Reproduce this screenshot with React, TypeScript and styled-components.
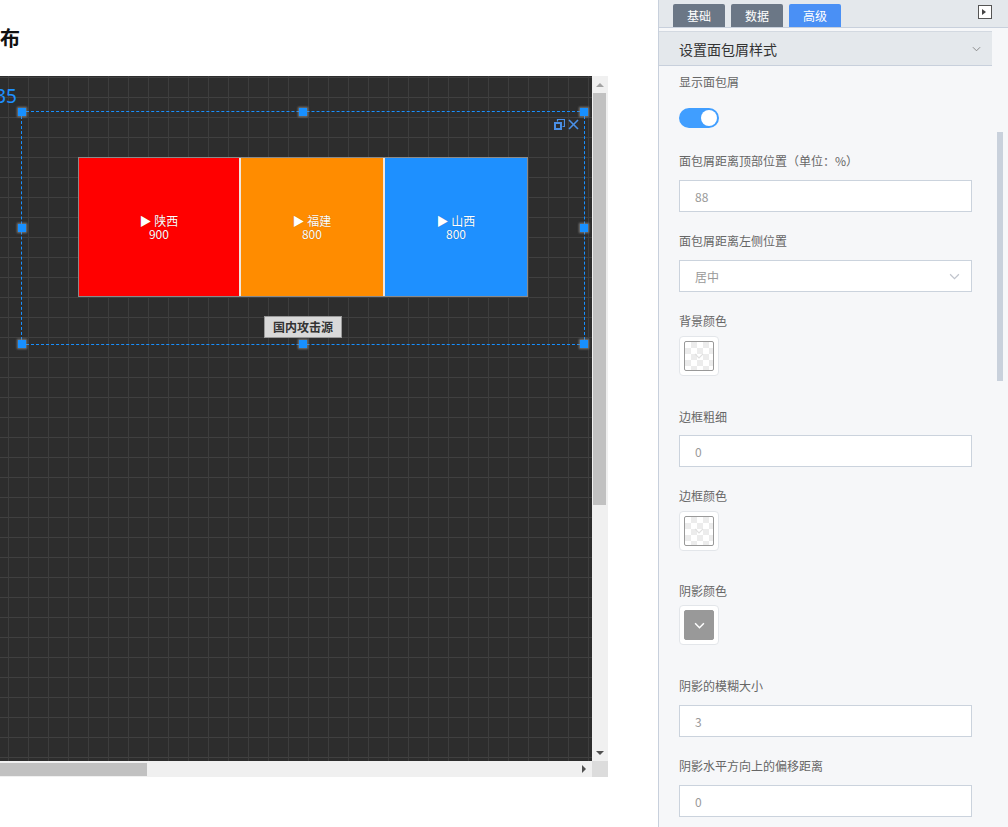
import React from "react";
import styled, { createGlobalStyle } from "styled-components";

const GlobalStyle = createGlobalStyle`
  html, body {
    margin: 0;
    padding: 0;
    background: #fff;
  }
  body {
    font-family: "Noto Sans CJK SC", "Noto Sans", sans-serif;
    font-size: 12px;
    color: #333;
  }
  * {
    box-sizing: border-box;
  }
`;

const Page = styled.div`
  display: flex;
  width: 1008px;
  height: 827px;
  overflow: hidden;
`;

/* ---------- stage (left) ---------- */

const Stage = styled.section`
  width: 658px;
  flex: none;
  overflow: hidden;
  background: #fff;
`;

// the stage is scrolled sideways, so its content starts left of the window
const StageInner = styled.div`
  margin-left: -120px;
  padding-top: 24px;
`;

const Title = styled.h1`
  margin: 0 0 24px;
  font-size: 20px;
  line-height: 28px;
  font-weight: 700;
  color: #111;
`;

const Frame = styled.div`
  width: 728px;
  height: 701px;
  display: grid;
  grid-template-columns: 1fr 16px;
  grid-template-rows: 1fr 16px;
`;

const Canvas = styled.div`
  position: relative;
  overflow: hidden;
  background-color: #2d2d2d;
  background-image: linear-gradient(to right, #3d3d3d 1px, transparent 1px),
    linear-gradient(to bottom, #404040 1px, transparent 1px);
  background-size: 20px 20px;
  background-position: 8px 1px;
`;

const Selection = styled.div`
  position: absolute;
  left: 141px;
  top: 35px;
  width: 564px;
  height: 234px;
  border: 1px dashed #1890ff;
`;

const Coord = styled.span`
  position: absolute;
  right: calc(100% + 5px);
  bottom: calc(100% + 6px);
  font-family: "Noto Sans", sans-serif;
  font-size: 19px;
  line-height: 20px;
  color: #1e90ff;
  white-space: nowrap;
`;

const Handle = styled.span<{ $x: number; $y: number }>`
  position: absolute;
  left: calc(${(p) => p.$x}% - 4px);
  top: calc(${(p) => p.$y}% - 4px);
  width: 8px;
  height: 8px;
  background: #1890ff;
  box-shadow: 0 0 2px 1px rgba(140, 140, 140, 0.8);
`;

const WidgetTools = styled.div`
  position: absolute;
  top: 7px;
  right: 5px;
  display: flex;
  gap: 3px;
`;

const Widget = styled.div`
  display: flex;
  flex-direction: column;
  align-items: center;
  padding-top: 45px;
`;

const Treemap = styled.div`
  width: 450px;
  height: 140px;
  display: flex;
  border: 1px solid #8a8a8a;
`;

const Cell = styled.div<{ $color: string; $first?: boolean }>`
  flex-basis: 0;
  display: flex;
  flex-direction: column;
  align-items: center;
  justify-content: center;
  background: ${(p) => p.$color};
  border-left: ${(p) => (p.$first ? "none" : "2px solid #f1e6dc")};
  color: #fff;
  font-size: 12px;
  line-height: 13px;
  text-shadow: 0 0 1px rgba(0, 0, 0, 0.3);
`;

const SeriesLabel = styled.div`
  margin-top: 19px;
  padding: 0 8px;
  line-height: 20px;
  font-size: 12px;
  font-weight: 700;
  color: #333;
  background: #d9d9d9;
  border: 1px solid #9a9a9a;
`;

const VScroll = styled.div`
  display: flex;
  flex-direction: column;
  align-items: center;
  background: #f0f0f0;
`;

const HScroll = styled.div`
  display: flex;
  align-items: center;
  background: #f0f0f0;
`;

const Corner = styled.div`
  background: #dcdcdc;
`;

const ArrowBox = styled.div<{ $dim?: boolean }>`
  flex: none;
  width: 16px;
  height: 17px;
  display: flex;
  align-items: center;
  justify-content: center;
  color: ${(p) => (p.$dim ? "#a3a3a3" : "#505050")};
`;

const VTrack = styled.div`
  flex: 1;
  align-self: stretch;
  padding: 0 2px 0 1px;
`;

const VThumb = styled.div`
  height: 412px;
  background: #c1c1c1;
`;

const HTrack = styled.div`
  flex: 1;
  align-self: stretch;
  padding: 2px 0 1px 17px;
`;

const HThumb = styled.div`
  width: 250px;
  height: 100%;
  background: #c1c1c1;
`;

/* ---------- settings panel (right) ---------- */

const Panel = styled.aside`
  position: relative;
  flex: 1;
  display: flex;
  flex-direction: column;
  border-left: 1px solid #c8d0dc;
  background: #f6f7f9;
`;

const TabBar = styled.div`
  height: 28px;
  flex: none;
  display: flex;
  align-items: flex-end;
  gap: 6px;
  padding: 0 16px 0 14px;
  background: #e4e8ec;
  border-bottom: 1px solid #c8d0dc;
`;

const Tab = styled.div<{ $active?: boolean }>`
  width: 52px;
  height: 23px;
  display: flex;
  align-items: center;
  justify-content: center;
  border-radius: 2px 2px 0 0;
  background: ${(p) => (p.$active ? "#4a90f5" : "#6b7786")};
  color: #fff;
  font-size: 12px;
`;

const Collapse = styled.div`
  margin-left: auto;
  align-self: flex-start;
  margin-top: 5px;
  width: 14px;
  height: 14px;
  display: flex;
`;

const PanelBody = styled.div`
  flex: 1;
  overflow: hidden;
  padding: 3px 16px 0 0;
`;

const SectionHead = styled.div`
  height: 35px;
  display: flex;
  align-items: center;
  justify-content: space-between;
  padding: 0 11px 0 20px;
  background: #e4e8ec;
  border-top: 1px solid #d3d9e1;
  border-bottom: 1px solid #c8d0dc;
  font-size: 14px;
  color: #333;
`;

const Form = styled.div`
  padding: 6px 20px 0;
`;

const Field = styled.div<{ $space?: number }>`
  margin-bottom: ${(p) => p.$space ?? 19}px;
`;

const Label = styled.div<{ $gap: number }>`
  margin-bottom: ${(p) => p.$gap}px;
  font-size: 12px;
  line-height: 20px;
  color: #666;
`;

const Toggle = styled.div`
  width: 40px;
  height: 20px;
  padding: 2px;
  display: flex;
  justify-content: flex-end;
  border-radius: 10px;
  background: #409eff;
`;

const Knob = styled.span`
  width: 16px;
  height: 16px;
  border-radius: 50%;
  background: #fff;
`;

const TextInput = styled.input`
  display: block;
  width: 100%;
  height: 32px;
  padding: 0 15px;
  border: 1px solid #cbd3dd;
  border-radius: 0;
  background: #fff;
  font-family: inherit;
  font-size: 12px;
  color: #999;
  outline: none;
`;

const Select = styled.div`
  height: 32px;
  display: flex;
  align-items: center;
  justify-content: space-between;
  padding: 0 11px 0 15px;
  border: 1px solid #cbd3dd;
  background: #fff;
  color: #999;
`;

const Swatch = styled.div`
  width: 40px;
  height: 40px;
  padding: 4px;
  border: 1px solid #e3e6ea;
  border-radius: 4px;
  background: #fff;
`;

const SwatchFill = styled.div<{ $color?: string }>`
  width: 100%;
  height: 100%;
  display: flex;
  align-items: center;
  justify-content: center;
  border: 1px solid #999;
  border-radius: 2px;
  background-color: ${(p) => p.$color ?? "#fff"};
  background-image: ${(p) =>
    p.$color
      ? "none"
      : "linear-gradient(45deg, #ececec 25%, transparent 25%, transparent 75%, #ececec 75%), linear-gradient(45deg, #ececec 25%, transparent 25%, transparent 75%, #ececec 75%)"};
  background-size: 12px 12px;
  background-position: 0 0, 6px 6px;
`;

const PanelThumb = styled.div`
  position: absolute;
  top: 132px;
  right: 5px;
  width: 6px;
  height: 249px;
  background: #c9d1dc;
`;

/* ---------- icons ---------- */

const Chevron = ({
  w = 9,
  color = "#999",
  stroke = 1.1,
}: {
  w?: number;
  color?: string;
  stroke?: number;
}) => (
  <svg width={w} height={Math.ceil(w / 2) + 1} viewBox="0 0 10 6" fill="none">
    <polyline points="1,1 5,5 9,1" stroke={color} strokeWidth={stroke} />
  </svg>
);

const RestoreIcon = () => (
  <svg width="11" height="11" viewBox="0 0 11 11" fill="none" stroke="#4a8fe6">
    <path d="M3.5 2.5V0.5h7v7H8.5" strokeWidth="1.2" />
    <rect x="1" y="4" width="6" height="6" strokeWidth="2" />
  </svg>
);

const CloseIcon = () => (
  <svg width="11" height="11" viewBox="0 0 11 11" stroke="#4a8fe6" strokeWidth="1.6">
    <line x1="1" y1="1" x2="10" y2="10" />
    <line x1="10" y1="1" x2="1" y2="10" />
  </svg>
);

const Tri = ({ dir }: { dir: "up" | "down" | "right" }) => {
  const pts = dir === "up" ? "0,4 4,0 8,4" : dir === "down" ? "0,0 8,0 4,4" : "0,0 4,4 0,8";
  const size = dir === "right" ? { w: 4, h: 8 } : { w: 8, h: 4 };
  return (
    <svg width={size.w} height={size.h} viewBox={`0 0 ${size.w} ${size.h}`}>
      <polygon points={pts} fill="currentColor" />
    </svg>
  );
};

const CollapseIcon = () => (
  <svg width="14" height="14" viewBox="0 0 14 14">
    <rect x="0.5" y="0.5" width="13" height="13" fill="#fff" stroke="#555" />
    <polygon points="4,4 8,7 4,10" fill="#444" />
  </svg>
);

/* ---------- data ---------- */

const regions = [
  { name: "陕西", value: 900, color: "#ff0000" },
  { name: "福建", value: 800, color: "#ff8c00" },
  { name: "山西", value: 800, color: "#1e90ff" },
];

const handles = [
  [0, 0], [50, 0], [100, 0],
  [0, 50], [100, 50],
  [0, 100], [50, 100], [100, 100],
];

const App: React.FC = () => {
  return (
    <Page>
      <GlobalStyle />
      <Stage>
        <StageInner>
          <Title>国内攻击源分布</Title>
          <Frame>
            <Canvas>
              <Selection>
                <Coord>35</Coord>
                {handles.map(([x, y]) => (
                  <Handle key={`${x}-${y}`} $x={x} $y={y} />
                ))}
                <WidgetTools>
                  <RestoreIcon />
                  <CloseIcon />
                </WidgetTools>
                <Widget>
                  <Treemap>
                    {regions.map((r, i) => (
                      <Cell
                        key={r.name}
                        $color={r.color}
                        $first={i === 0}
                        style={{ flexGrow: r.value }}
                      >
                        <span>▶ {r.name}</span>
                        <span>{r.value}</span>
                      </Cell>
                    ))}
                  </Treemap>
                  <SeriesLabel>国内攻击源</SeriesLabel>
                </Widget>
              </Selection>
            </Canvas>
            <VScroll>
              <ArrowBox $dim>
                <Tri dir="up" />
              </ArrowBox>
              <VTrack>
                <VThumb />
              </VTrack>
              <ArrowBox>
                <Tri dir="down" />
              </ArrowBox>
            </VScroll>
            <HScroll>
              <HTrack>
                <HThumb />
              </HTrack>
              <ArrowBox>
                <Tri dir="right" />
              </ArrowBox>
            </HScroll>
            <Corner />
          </Frame>
        </StageInner>
      </Stage>

      <Panel>
        <TabBar>
          <Tab>基础</Tab>
          <Tab>数据</Tab>
          <Tab $active>高级</Tab>
          <Collapse>
            <CollapseIcon />
          </Collapse>
        </TabBar>
        <PanelBody>
          <SectionHead>
            <span>设置面包屑样式</span>
            <Chevron color="#8a8a8a" />
          </SectionHead>
          <Form>
            <Field $space={23}>
              <Label $gap={16}>显示面包屑</Label>
              <Toggle>
                <Knob />
              </Toggle>
            </Field>
            <Field>
              <Label $gap={9}>面包屑距离顶部位置（单位：%）</Label>
              <TextInput readOnly value="88" />
            </Field>
            <Field>
              <Label $gap={9}>面包屑距离左侧位置</Label>
              <Select>
                <span>居中</span>
                <Chevron w={11} color="#c0c4cc" />
              </Select>
            </Field>
            <Field $space={31}>
              <Label $gap={5}>背景颜色</Label>
              <Swatch>
                <SwatchFill>
                  <Chevron w={10} color="#e0e0e0" />
                </SwatchFill>
              </Swatch>
            </Field>
            <Field>
              <Label $gap={8}>边框粗细</Label>
              <TextInput readOnly value="0" />
            </Field>
            <Field $space={30}>
              <Label $gap={5}>边框颜色</Label>
              <Swatch>
                <SwatchFill>
                  <Chevron w={10} color="#e0e0e0" />
                </SwatchFill>
              </Swatch>
            </Field>
            <Field $space={31}>
              <Label $gap={4}>阴影颜色</Label>
              <Swatch>
                <SwatchFill $color="#999999">
                  <Chevron w={11} color="#fff" stroke={1.4} />
                </SwatchFill>
              </Swatch>
            </Field>
            <Field>
              <Label $gap={9}>阴影的模糊大小</Label>
              <TextInput readOnly value="3" />
            </Field>
            <Field>
              <Label $gap={9}>阴影水平方向上的偏移距离</Label>
              <TextInput readOnly value="0" />
            </Field>
          </Form>
        </PanelBody>
        <PanelThumb />
      </Panel>
    </Page>
  );
};

export default App;
